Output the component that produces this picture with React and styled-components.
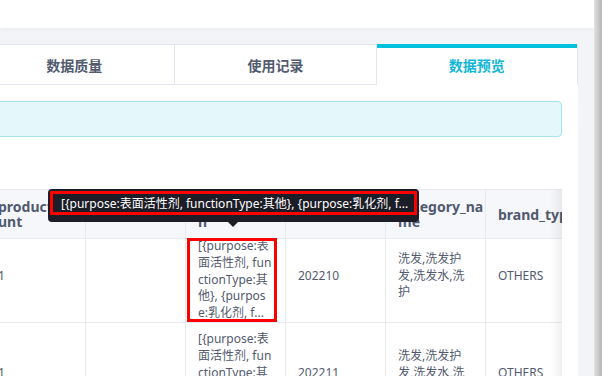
import styled, { createGlobalStyle } from 'styled-components'

const GlobalStyle = createGlobalStyle`
    html, body {
        margin: 0;
        padding: 0;
        width: 602px;
        height: 376px;
        overflow: hidden;
    }

    body {
        font-family: "Noto Sans", "Noto Sans CJK SC", sans-serif;
        background: #f3f4f8;
        color: #515a6e;
    }
`

const purposeText = '[{purpose:表面活性剂, functionType:其他}, {purpose:乳化剂, f...'

const Page = styled.div`
    display: flex;
    width: 602px;
    height: 376px;
    overflow: hidden;
`

const Main = styled.div`
    flex: 1;
    min-width: 0;
    display: flex;
    flex-direction: column;
    background: #f3f4f8;
`

const Scrollbar = styled.div`
    width: 8px;
    flex-shrink: 0;
    background: linear-gradient(to right, #e2e2e2, #b4b4b4);
`

const TopBar = styled.div`
    height: 28px;
    flex-shrink: 0;
    background: #fff;
    box-shadow: 0 1px 6px rgba(0, 0, 0, 0.04);
`

const Content = styled.div`
    flex: 1;
    min-height: 0;
    display: flex;
    flex-direction: column;
    padding: 16px 16px 0 0;
`

const Card = styled.div`
    flex: 1;
    display: flex;
    flex-direction: column;
    margin-left: -26px;
`

const Tabs = styled.div`
    display: flex;
`

const Tab = styled.div`
    flex: 1;
    height: 41px;
    box-sizing: border-box;
    display: flex;
    align-items: center;
    justify-content: center;
    background: #fff;
    font-size: 14px;
    font-weight: 700;
    color: ${({ active }) => (active ? '#0fb6d6' : '#515a6e')};
    border-top: ${({ active }) => (active ? 'none' : '1px solid #e3e5ef')};
    border-bottom: ${({ active }) => (active ? '1px solid #fff' : '1px solid #e3e5ef')};
    border-right: 1px solid #e3e5ef;
    box-shadow: ${({ active }) => (active ? 'inset 0 4px 0 #00c1de' : 'none')};
    padding-top: ${({ active }) => (active ? '1px' : '0')};
`

const Panel = styled.div`
    flex: 1;
    background: #fff;
    padding: 16px 16px 0 16px;
    display: flex;
    flex-direction: column;
`

const Alert = styled.div`
    height: 36px;
    box-sizing: border-box;
    background: #e4f8fb;
    border: 1px solid #a5e4ee;
    border-radius: 4px;
`

const TableWrap = styled.div`
    position: relative;
    margin-top: 52px;
    overflow: hidden;

    &::after {
        content: '';
        position: absolute;
        top: 0;
        right: 0;
        bottom: 0;
        width: 12px;
        background: linear-gradient(to right, rgba(0, 0, 0, 0), rgba(0, 0, 0, 0.06));
    }
`

const Table = styled.table`
    border-collapse: collapse;
    table-layout: fixed;
    width: 600px;
    margin-left: -5px;
    border-top: 1px solid #e8eaef;

    col {
        width: 100px;
    }
`

const Th = styled.th`
    height: 48px;
    padding: 0 12px;
    background: #f6f7fb;
    border: 1px solid #e8eaef;
    border-top: none;
    text-align: left;
    vertical-align: middle;
    font-size: 14px;
    font-weight: 700;
    line-height: 15px;
    color: #515a6e;
    white-space: pre-line;
    overflow: hidden;
`

const Td = styled.td`
    padding: ${({ first }) => (first ? '0 12px 9px 12px' : '8px 12px')};
    border: 1px solid #e8eaef;
    vertical-align: middle;
    font-size: 12px;
    line-height: 16.75px;
    color: #515a6e;
    word-break: break-all;
`

const HoverTd = styled.td`
    padding: 0;
    border: 1px solid #e8eaef;
    vertical-align: top;
`

const Highlight = styled.div`
    height: 84px;
    box-sizing: border-box;
    margin: -1px 8px 0 1px;
    padding: 0 0 0 11px;
    outline: 3px solid #ff0000;
    outline-offset: -3px;
`

const CellText = styled.div`
    width: 73.6px;
    font-size: 12px;
    line-height: 16.75px;
    color: #515a6e;
    word-break: break-all;
`

const Tooltip = styled.div`
    position: absolute;
    left: 58px;
    top: 0;
    width: 371px;
    box-sizing: border-box;
    padding: 2px 2px 7px 2px;
    background: #1c1d27;
    border-radius: 4px;
    z-index: 2;

    &::after {
        content: '';
        position: absolute;
        left: 180px;
        bottom: -5px;
        border-left: 5px solid transparent;
        border-right: 5px solid transparent;
        border-top: 5px solid #1c1d27;
    }
`

const TooltipText = styled.div`
    height: 24px;
    box-sizing: border-box;
    border: 3px solid #ff0000;
    padding: 0 8px;
    display: flex;
    align-items: center;
    font-size: 12px;
    color: #fff;
    white-space: nowrap;
    overflow: hidden;
`

const headers = ['product_\nunt', '', 'functio\nn', 'month_id', 'category_na\nme', 'brand_type']

const rows = [
    { count: '1', month: '202210', category: '洗发,洗发护发,洗发水,洗护', brand: 'OTHERS' },
    { count: '1', month: '202211', category: '洗发,洗发护发,洗发水,洗护', brand: 'OTHERS' },
]

export default function App() {
    return (
        <Page>
            <GlobalStyle />
            <Main>
                <TopBar />
                <Content>
                    <Card>
                        <Tabs>
                            <Tab>数据质量</Tab>
                            <Tab>使用记录</Tab>
                            <Tab active>数据预览</Tab>
                        </Tabs>
                        <Panel>
                            <Alert />
                            <TableWrap>
                                <Tooltip>
                                    <TooltipText>{purposeText}</TooltipText>
                                </Tooltip>
                                <Table>
                                    <colgroup>
                                        {headers.map((h, i) => <col key={i} />)}
                                    </colgroup>
                                    <thead>
                                        <tr>
                                            {headers.map((h, i) => <Th key={i}>{h}</Th>)}
                                        </tr>
                                    </thead>
                                    <tbody>
                                        {rows.map((r, i) => (
                                            <tr key={i}>
                                                <Td first={i === 0}>{r.count}</Td>
                                                <Td first={i === 0}></Td>
                                                {i === 0 ? (
                                                    <HoverTd>
                                                        <Highlight>
                                                            <CellText>{purposeText}</CellText>
                                                        </Highlight>
                                                    </HoverTd>
                                                ) : (
                                                    <Td>
                                                        <CellText>{purposeText}</CellText>
                                                    </Td>
                                                )}
                                                <Td first={i === 0}>{r.month}</Td>
                                                <Td first={i === 0}>{r.category}</Td>
                                                <Td first={i === 0}>{r.brand}</Td>
                                            </tr>
                                        ))}
                                    </tbody>
                                </Table>
                            </TableWrap>
                        </Panel>
                    </Card>
                </Content>
            </Main>
            <Scrollbar />
        </Page>
    )
}
